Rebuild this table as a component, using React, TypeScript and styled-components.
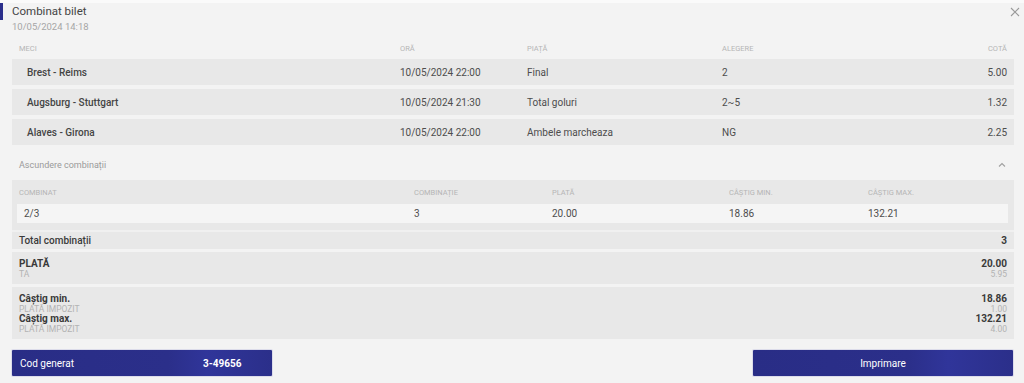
import { createGlobalStyle, styled } from "styled-components";

const GlobalStyle = createGlobalStyle`
  html, body {
    margin: 0;
    padding: 0;
    background: #f3f3f3;
    font-family: Roboto, "Liberation Sans", Arial, sans-serif;
    color: #333;
  }
`;

const Page = styled.div`
  width: 1024px;
  height: 383px;
  box-sizing: border-box;
  border-top: 3px solid #fafafa;
  padding: 0 10px 0 12px;
  overflow: hidden;
`;

const Header = styled.div`
  position: relative;
  padding-top: 1px;
  height: 33px;
`;

const Accent = styled.div`
  position: absolute;
  left: -12px;
  top: 0;
  width: 3px;
  height: 17px;
  background: #2b2f8c;
`;

const Title = styled.div`
  font-size: 11.5px;
  line-height: 14px;
  color: #444;
`;

const Stamp = styled.div`
  font-size: 9.5px;
  line-height: 12px;
  margin-top: 3px;
  color: #a6a6a6;
`;

const Close = styled.button`
  position: absolute;
  right: -8px;
  top: 2px;
  width: 14px;
  height: 14px;
  padding: 0;
  border: none;
  background: none;
  color: #9a9a9a;
  display: flex;
  align-items: center;
  justify-content: center;
`;

const MatchGrid = styled.div<{ $head?: boolean }>`
  display: grid;
  grid-template-columns: 388px 127px 195px 1fr 100px;
  align-items: center;
  height: ${(p) => (p.$head ? "22px" : "26px")};
  margin-bottom: ${(p) => (p.$head ? "0" : "4px")};
  background: ${(p) => (p.$head ? "transparent" : "#e8e8e8")};
  font-size: ${(p) => (p.$head ? "7.5px" : "10px")};
  color: ${(p) => (p.$head ? "#b5b5b5" : "#4d4d4d")};
  text-transform: ${(p) => (p.$head ? "uppercase" : "none")};
  & > :first-child {
    padding-left: ${(p) => (p.$head ? "7px" : "15px")};
    font-weight: ${(p) => (p.$head ? 400 : 500)};
    color: ${(p) => (p.$head ? "#b5b5b5" : "#444")};
  }
  & > :last-child {
    text-align: right;
    padding-right: 7px;
  }
`;

const Toggle = styled.div`
  display: flex;
  justify-content: space-between;
  align-items: center;
  height: 31px;
  padding: 0 8px 0 7px;
  font-size: 9px;
  color: #9a9a9a;
`;

const ComboPanel = styled.div`
  background: #e8e8e8;
  padding: 0 6px 7px 5px;
  border-bottom: 2px solid #f0f0f0;
`;

const ComboGrid = styled.div<{ $head?: boolean }>`
  display: grid;
  grid-template-columns: 397px 138px 177px 139px 1fr;
  align-items: center;
  height: ${(p) => (p.$head ? "24px" : "19px")};
  background: ${(p) => (p.$head ? "transparent" : "#f5f5f5")};
  font-size: ${(p) => (p.$head ? "7.5px" : "10px")};
  color: ${(p) => (p.$head ? "#b5b5b5" : "#4d4d4d")};
  text-transform: ${(p) => (p.$head ? "uppercase" : "none")};
  & > :first-child {
    padding-left: ${(p) => (p.$head ? "2px" : "7px")};
  }
`;

const SummaryBlock = styled.div<{ $gap?: boolean }>`
  background: #e8e8e8;
  padding: ${(p) => (p.$gap ? "6px 7px" : "0 7px")};
  margin-bottom: 3px;
`;

const Line = styled.div<{ $small?: boolean; $tall?: boolean }>`
  display: flex;
  justify-content: space-between;
  align-items: center;
  height: ${(p) => (p.$tall ? "17px" : p.$small ? "9px" : "11px")};
  font-size: ${(p) => (p.$small ? "8.5px" : "10px")};
  font-weight: ${(p) => (p.$small ? 400 : 700)};
  color: ${(p) => (p.$small ? "#b3b3b3" : "#3a3a3a")};
`;

const Actions = styled.div`
  display: flex;
  justify-content: space-between;
  margin-top: 11px;
  padding-right: 1px;
`;

const Button = styled.button<{ $center?: boolean }>`
  width: 260px;
  height: 26px;
  border: none;
  border-radius: 1px;
  background: linear-gradient(90deg, #292d86 0%, #2b2f8a 60%, #30359a 75%, #2b2f8a 100%);
  box-shadow: 0 0 0 1px #dcdcea;
  color: #fff;
  font-family: inherit;
  font-size: 10px;
  display: grid;
  grid-template-columns: ${(p) => (p.$center ? "1fr" : "183px 1fr")};
  justify-items: ${(p) => (p.$center ? "center" : "start")};
  align-items: center;
  padding: ${(p) => (p.$center ? "0" : "0 0 0 8px")};
  b {
    font-weight: 700;
  }
`;

const matches = [
  ["Brest - Reims", "10/05/2024 22:00", "Final", "2", "5.00"],
  ["Augsburg - Stuttgart", "10/05/2024 21:30", "Total goluri", "2~5", "1.32"],
  ["Alaves - Girona", "10/05/2024 22:00", "Ambele marcheaza", "NG", "2.25"],
];

export default function App() {
  return (
    <>
      <GlobalStyle />
      <Page>
        <Header>
          <Accent />
          <Title>Combinat bilet</Title>
          <Stamp>10/05/2024 14:18</Stamp>
          <Close aria-label="close">
            <svg width="10" height="10" viewBox="0 0 10 10" stroke="currentColor" strokeWidth="1.1">
              <path d="M1 1L9 9M9 1L1 9" />
            </svg>
          </Close>
        </Header>

        <MatchGrid $head>
          <span>Meci</span>
          <span>Oră</span>
          <span>Piață</span>
          <span>Alegere</span>
          <span>Cotă</span>
        </MatchGrid>
        {matches.map((m) => (
          <MatchGrid key={m[0]}>
            {m.map((v, i) => (
              <span key={i}>{v}</span>
            ))}
          </MatchGrid>
        ))}

        <Toggle>
          <span>Ascundere combinații</span>
          <svg width="8" height="6" viewBox="0 0 8 6" fill="none" stroke="#a0a0a0" strokeWidth="1.1">
            <path d="M1 4.5L4 1.5L7 4.5" />
          </svg>
        </Toggle>

        <ComboPanel>
          <ComboGrid $head>
            <span>Combinat</span>
            <span>Combinație</span>
            <span>Plată</span>
            <span>Câștig min.</span>
            <span>Câștig max.</span>
          </ComboGrid>
          <ComboGrid>
            <span>2/3</span>
            <span>3</span>
            <span>20.00</span>
            <span>18.86</span>
            <span>132.21</span>
          </ComboGrid>
        </ComboPanel>

        <SummaryBlock>
          <Line $tall>
            <span style={{ fontWeight: 500 }}>Total combinații</span>
            <span>3</span>
          </Line>
        </SummaryBlock>

        <SummaryBlock $gap>
          <Line>
            <span>PLATĂ</span>
            <span>20.00</span>
          </Line>
          <Line $small>
            <span>TA</span>
            <span>5.95</span>
          </Line>
        </SummaryBlock>

        <SummaryBlock $gap>
          <Line>
            <span>Câștig min.</span>
            <span>18.86</span>
          </Line>
          <Line $small>
            <span>PLATĂ IMPOZIT</span>
            <span>1.00</span>
          </Line>
          <Line>
            <span>Câștig max.</span>
            <span>132.21</span>
          </Line>
          <Line $small>
            <span>PLATĂ IMPOZIT</span>
            <span>4.00</span>
          </Line>
        </SummaryBlock>

        <Actions>
          <Button>
            <span>Cod generat</span>
            <b>3-49656</b>
          </Button>
          <Button $center>Imprimare</Button>
        </Actions>
      </Page>
    </>
  );
}
